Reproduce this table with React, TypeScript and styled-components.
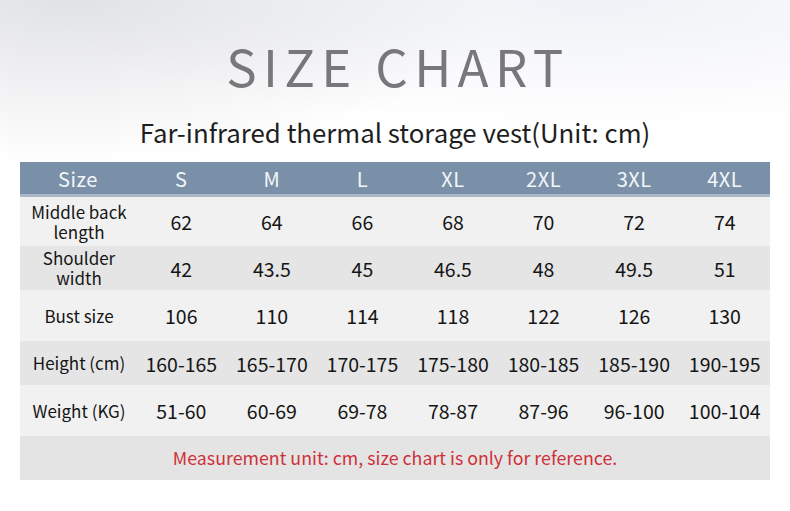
import React from 'react';
import styled, { createGlobalStyle } from 'styled-components';

const GlobalStyle = createGlobalStyle`
  html, body {
    margin: 0;
    padding: 0;
  }
  body {
    font-family: "Noto Sans CJK SC", "Noto Sans", sans-serif;
  }
`;

const Page = styled.div`
  width: 790px;
  height: 511px;
  box-sizing: border-box;
  padding: 0 20px;
  display: flex;
  flex-direction: column;
  align-items: stretch;
  background:
    radial-gradient(ellipse 55% 32% at 8% 0%, rgba(196, 198, 204, 0.5), rgba(255, 255, 255, 0) 100%),
    radial-gradient(ellipse 70% 25% at 75% 0%, rgba(225, 228, 238, 0.5), rgba(255, 255, 255, 0) 100%),
    #ffffff;
  overflow: hidden;
`;

const Title = styled.h1`
  margin: 0;
  padding: 32px 0 0 6px;
  height: 66px;
  text-align: center;
  font-weight: 400;
  font-size: 51px;
  line-height: 66px;
  letter-spacing: 6.3px;
  color: #78787a;
`;

const Subtitle = styled.h2`
  margin: 0;
  padding-top: 16px;
  height: 48px;
  text-align: center;
  font-weight: 400;
  font-size: 25.8px;
  line-height: 36px;
  color: #1e1e1e;
`;

const Table = styled.div`
  display: flex;
  flex-direction: column;
`;

const Row = styled.div<{ $h: number; $bg: string }>`
  display: grid;
  grid-template-columns: 116px repeat(7, 1fr);
  height: ${p => p.$h}px;
  background: ${p => p.$bg};
  align-items: center;
`;

const HeadRow = styled(Row)`
  border-bottom: 3px solid #a9b8c9;
`;

const HeadCell = styled.div`
  text-align: center;
  color: #f3f6f9;
  font-size: 20px;
  letter-spacing: 0.5px;
  line-height: 24px;
  padding-top: 1px;
`;

const LabelCell = styled.div`
  text-align: center;
  color: #151515;
  font-size: 17px;
  line-height: 20px;
  padding-left: 2px;
  white-space: nowrap;
`;

const Cell = styled.div`
  text-align: center;
  color: #151515;
  font-size: 19.5px;
  white-space: nowrap;
`;

const Note = styled.div`
  height: 44px;
  background: #e4e4e5;
  display: flex;
  align-items: center;
  justify-content: center;
  color: #cf3139;
  font-size: 17.8px;
  padding-bottom: 2px;
  box-sizing: border-box;
`;

const sizes = ['S', 'M', 'L', 'XL', '2XL', '3XL', '4XL'];

const rows: { label: React.ReactNode; values: string[]; h: number; bg: string }[] = [
  { label: <>Middle back<br />length</>, values: ['62', '64', '66', '68', '70', '72', '74'], h: 49, bg: '#f1f1f1' },
  { label: <>Shoulder<br />width</>, values: ['42', '43.5', '45', '46.5', '48', '49.5', '51'], h: 44, bg: '#e5e5e6' },
  { label: 'Bust size', values: ['106', '110', '114', '118', '122', '126', '130'], h: 51, bg: '#f1f1f1' },
  { label: 'Height (cm)', values: ['160-165', '165-170', '170-175', '175-180', '180-185', '185-190', '190-195'], h: 44, bg: '#e5e5e6' },
  { label: 'Weight (KG)', values: ['51-60', '60-69', '69-78', '78-87', '87-96', '96-100', '100-104'], h: 51, bg: '#f1f1f1' },
];

const App: React.FC = () => {
  return (
    <>
      <GlobalStyle />
      <Page>
        <Title>SIZE CHART</Title>
        <Subtitle>Far-infrared thermal storage vest(Unit: cm)</Subtitle>
        <Table>
          <HeadRow $h={32} $bg="#7a90a8">
            <HeadCell>Size</HeadCell>
            {sizes.map(s => (
              <HeadCell key={s}>{s}</HeadCell>
            ))}
          </HeadRow>
          {rows.map((r, i) => (
            <Row key={i} $h={r.h} $bg={r.bg}>
              <LabelCell>{r.label}</LabelCell>
              {r.values.map((v, j) => (
                <Cell key={j}>{v}</Cell>
              ))}
            </Row>
          ))}
          <Note>Measurement unit: cm, size chart is only for reference.</Note>
        </Table>
      </Page>
    </>
  );
};

export default App;
